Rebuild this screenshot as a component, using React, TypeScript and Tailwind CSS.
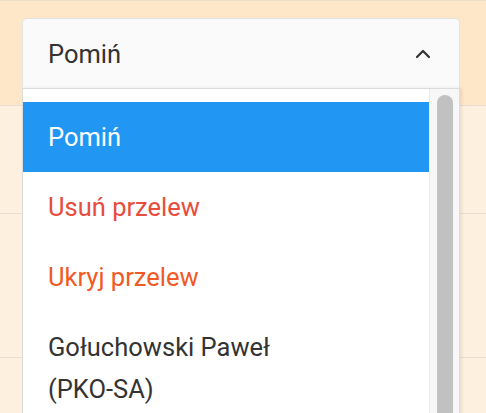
import { ChevronUp } from 'lucide-react';

const OPTIONS = [
  { lines: ['Pomiń'], tone: 'text-white', active: true },
  { lines: ['Usuń przelew'], tone: 'text-[#e74c3c]' },
  { lines: ['Ukryj przelew'], tone: 'text-[#f15a24]' },
  { lines: ['Gołuchowski Paweł', '(PKO-SA)'], tone: 'text-[#333333]' },
];

export default function App() {
  return (
    <main
      className="relative h-[413px] w-[486px] overflow-hidden bg-[#fef0de]"
      style={{ fontFamily: 'Roboto, "Noto Sans", sans-serif' }}
    >
      {/* table rows behind the dropdown */}
      <div className="h-[105px] border-t border-[#eddcc6] bg-[#fee7c8] pl-[22px] pr-[26px] pt-[17px]">
        <button className="flex h-[71px] w-full items-center justify-between rounded-t-[5px] border border-b-0 border-[#e2e2e2] bg-[#fafafa] pl-[25px] pr-[24px] text-[25.5px] text-[#333333]">
          <span>Pomiń</span>
          <ChevronUp className="h-[24px] w-[24px] text-[#333333]" strokeWidth={2.2} />
        </button>
      </div>
      <div className="h-[108px] border-t border-[#e6ded3]" />
      <div className="h-[144px] border-t border-[#e6ded3]" />
      <div className="h-[60px] border-t border-[#e6ded3]" />

      {/* open list */}
      <div className="absolute left-[22px] top-[88px] flex h-[340px] w-[438px] border border-[#dcdcdc] bg-white shadow-[2px_0_3px_rgba(0,0,0,0.08)]">
        <ul className="flex-1 pt-[13px]">
          {OPTIONS.map((o) => (
            <li
              key={o.lines[0]}
              className={`py-[14px] pl-[25px] pr-[20px] text-[25.5px] leading-[42px] ${o.tone} ${
                o.active ? 'bg-[#2196f3]' : ''
              }`}
            >
              {o.lines.map((l) => (
                <div key={l}>{l}</div>
              ))}
            </li>
          ))}
        </ul>
        <div className="w-[30px] border-l border-[#ececec] bg-[#f7f7f7] pt-[6px]">
          <div className="mx-auto h-full w-[16px] rounded-t-full bg-[#c1c1c1]" />
        </div>
      </div>
    </main>
  );
}
